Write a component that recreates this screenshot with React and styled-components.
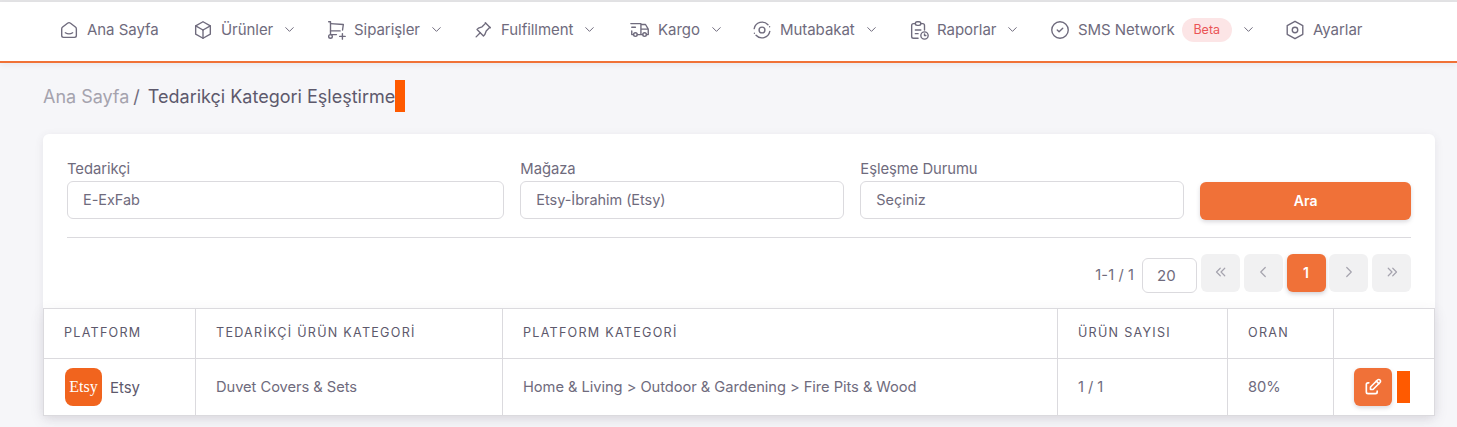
import React from "react";
import styled, { createGlobalStyle } from "styled-components";
import {
  TbSmartHome, TbBox, TbShoppingCartPlus, TbPin, TbTruckDelivery, TbCircleCheck,
  TbEdit, TbChevronDown, TbChevronLeft, TbChevronRight, TbChevronsLeft, TbChevronsRight,
} from "react-icons/tb";

const Global = createGlobalStyle`
  html, body { margin: 0; padding: 0; background: #f6f6f9; }
  body { font-family: Inter, "Noto Sans", sans-serif; color: #6f6b7d; height: 427px; overflow: hidden; }
  * { box-sizing: border-box; }
`;

const TopLine = styled.div`height: 2px; background: #e4e4e6;`;
const Nav = styled.nav`
  height: 61px; background: #fff; border-bottom: 2px solid #f07136;
  box-shadow: 0 2px 6px rgba(75,70,92,.08);
  display: flex; align-items: center; padding: 0 0 4px 58px;
`;
const NavItem = styled.div`
  width: ${p => p.$w}px; display: flex; align-items: center; flex: none;
  font-size: 15px; letter-spacing: -0.05px; color: #6f6b7d; white-space: nowrap;
  svg.main { width: 22px; height: 22px; flex: none; stroke-width: 1.5; margin-right: 7px; color: #6f6b7d; }
`;
const Chevron = styled(TbChevronDown)`
  width: 15px; height: 15px; margin-left: 9px; color: #6f6b7d; flex: none; stroke-width: 1.6;
`;
const Badge = styled.span`
  margin-left: 7px; width: 50px; height: 24px; border-radius: 12px; background: #fce5e6; color: #ea5455;
  font-size: 12.5px; display: flex; align-items: center; justify-content: center; letter-spacing: 0;
`;

const Main = styled.main`padding: 0 22px 0 43px;`;
const Crumbs = styled.div`
  height: 71px; display: flex; align-items: center; font-size: 18px; padding-bottom: 4px;
`;
const CrumbLink = styled.span`color: #a5a3ae; letter-spacing: -0.02px;`;
const CrumbSep = styled.span`color: #6f6b7d; margin: 0 8px 0 4px;`;
const CrumbNow = styled.span`color: #5d596c;`;
const Mark = styled.span`
  display: inline-block; background: #ff5a00; flex: none;
  width: ${p => p.$w}px; height: ${p => p.$h}px; margin-top: ${p => p.$raise ? -2 : 0}px;
`;

const Card = styled.section`
  background: #fff; border-radius: 6px; box-shadow: 0 2px 8px rgba(75,70,92,.1);
`;
const Filters = styled.div`padding: 24px 24px 0;`;
const FilterGrid = styled.div`
  display: grid; grid-template-columns: repeat(12, 1fr); column-gap: 16px; align-items: end;
  padding-bottom: 18px; border-bottom: 1px solid #dbdade;
`;
const Field = styled.label`grid-column: span ${p => p.$span}; display: block;`;
const Label = styled.div`font-size: 14.8px; line-height: 23px; color: #6f6b7d; letter-spacing: -0.05px;`;
const Input = styled.div`
  height: 38px; border: 1px solid #dbdade; border-radius: 6px; padding: 0 13px 2px 15px;
  display: flex; align-items: center; font-size: 14.5px; color: #6f6b7d; letter-spacing: -0.05px;
`;
const SearchButton = styled.button`
  grid-column: span 2; height: 38px; border: 0; border-radius: 6px; padding: 0 0 2px; background: #f07138; color: #fff;
  font: 600 14px Inter, sans-serif; box-shadow: 0 2px 4px rgba(75,70,92,.2); position: relative; top: 1px;
`;
const Pager = styled.div`
  height: 70px; display: flex; align-items: flex-start; justify-content: flex-end; padding-top: 16px;
`;
const PagerInfo = styled.span`font-size: 14.6px; margin: 12px 8px 0 0; letter-spacing: 0.1px;`;
const PageSize = styled.div`
  width: 55px; height: 35px; margin: 4px 4px 0 0; border: 1px solid #dbdade; border-radius: 6px;
  display: flex; align-items: center; padding-left: 14px; font-size: 15px;
`;
const PageButtons = styled.div`display: flex; gap: 3.75px;`;
const PageButton = styled.button`
  width: 39px; height: 38px; padding: 0 0 2px; border: 0; border-radius: 6px; display: flex; align-items: center; justify-content: center;
  background: ${p => p.$active ? "#f07138" : "#f1f1f2"}; color: ${p => p.$active ? "#fff" : "#a5a3ae"};
  font: 600 14px Inter, sans-serif; box-shadow: ${p => p.$active ? "0 2px 4px rgba(75,70,92,.25)" : "none"};
  svg { width: 18px; height: 18px; stroke-width: 1.6; }
`;

const Table = styled.table`
  width: 100%; table-layout: fixed; border-collapse: collapse; border: 1px solid #dbdade; background: #fff;
  box-shadow: 0 4px 14px rgba(75,70,92,.09);
`;
const Th = styled.th`
  height: 50px; padding: 0 20px 2px; border: 1px solid #dbdade; text-align: left; font-weight: 400;
  font-size: 12.6px; letter-spacing: 1.25px; color: #5d596c;
`;
const Td = styled.td`
  height: 57px; padding: 0 20px; border: 1px solid #dbdade; font-size: 14.7px; letter-spacing: -0.05px; color: #6f6b7d;
`;
const PlatformCell = styled.div`display: flex; align-items: center; gap: 8px; color: #5d596c; font-size: 15px;`;
const EtsyLogo = styled.span`
  width: 37px; height: 38px; border-radius: 8px; background: #f1641e; color: #fff; margin-left: 1px; margin-right: 0;
  font: 16px "Liberation Serif", serif; display: flex; align-items: center; justify-content: center; letter-spacing: 0;
`;
const ActionCell = styled.div`display: flex; align-items: center; gap: 5px;`;
const EditButton = styled.button`
  width: 38px; height: 38px; padding: 0; border: 0; border-radius: 6px; background: #f07138; color: #fff;
  display: flex; align-items: center; justify-content: center; box-shadow: 0 2px 4px rgba(75,70,92,.2);
  svg { width: 20px; height: 20px; }
`;

const MutabakatIcon = () => (
  <svg className="main" viewBox="0 0 24 24" fill="none" stroke="currentColor" strokeLinecap="round" strokeLinejoin="round">
    <circle cx="12" cy="12" r="3.200" />
    <path d="M3.500 10.500A8.700 8.700 0 0 1 18.500 6.300" />
    <path d="M20.500 13.500A8.700 8.700 0 0 1 5.500 17.700" />
    <path d="M20.300 8.500h.01M3.700 15.500h.01" />
  </svg>
);
const ReportIcon = () => (
  <svg className="main" viewBox="0 0 24 24" fill="none" stroke="currentColor" strokeLinecap="round" strokeLinejoin="round">
    <path d="M8 5H6a2 2 0 0 0-2 2v12a2 2 0 0 0 2 2h5" />
    <path d="M14 5h2a2 2 0 0 1 2 2v5" />
    <rect x="8" y="3" width="6" height="4" rx="2" />
    <path d="M8 12h6M8 16h3" />
    <circle cx="18" cy="18" r="4" />
    <path d="M18 16.200V18h1.500" />
  </svg>
);
const HexIcon = () => (
  <svg className="main" viewBox="0 0 24 24" fill="none" stroke="currentColor" strokeLinecap="round" strokeLinejoin="round">
    <path d="M12 2.500l8.500 4.800v9.400L12 21.500l-8.500-4.800V7.300z" />
    <circle cx="12" cy="12" r="3" />
  </svg>
);

const navItems = [
  { label: "Ana Sayfa", Icon: TbSmartHome, w: 134 },
  { label: "Ürünler", Icon: TbBox, w: 133, chev: true },
  { label: "Siparişler", Icon: TbShoppingCartPlus, w: 147, chev: true },
  { label: "Fulfillment", Icon: TbPin, w: 157, chev: true },
  { label: "Kargo", Icon: TbTruckDelivery, w: 122, chev: true },
  { label: "Mutabakat", Icon: MutabakatIcon, w: 157, chev: true },
  { label: "Raporlar", Icon: ReportIcon, w: 141, chev: true },
  { label: "SMS Network", Icon: TbCircleCheck, w: 235, chev: true, badge: true },
  { label: "Ayarlar", Icon: HexIcon, w: 90 },
];

export default function App() {
  return (
    <>
      <Global />
      <TopLine />
      <Nav>
        {navItems.map(({ label, Icon, w, chev, badge }) => (
          <NavItem key={label} $w={w}>
            <Icon className="main" />
            <span>{label}</span>
            {badge && <Badge>Beta</Badge>}
            {chev && <Chevron />}
          </NavItem>
        ))}
      </Nav>
      <Main>
        <Crumbs>
          <CrumbLink>Ana Sayfa</CrumbLink>
          <CrumbSep>/</CrumbSep>
          <CrumbNow>Tedarikçi Kategori Eşleştirme</CrumbNow>
          <Mark $w={10} $h={32} $raise />
        </Crumbs>
        <Card>
          <Filters>
            <FilterGrid>
              <Field $span={4}><Label>Tedarikçi</Label><Input>E-ExFab</Input></Field>
              <Field $span={3}><Label>Mağaza</Label><Input>Etsy-İbrahim (Etsy)</Input></Field>
              <Field $span={3}><Label>Eşleşme Durumu</Label><Input>Seçiniz</Input></Field>
              <SearchButton>Ara</SearchButton>
            </FilterGrid>
            <Pager>
              <PagerInfo>1-1 / 1</PagerInfo>
              <PageSize>20</PageSize>
              <PageButtons>
                <PageButton><TbChevronsLeft /></PageButton>
                <PageButton><TbChevronLeft /></PageButton>
                <PageButton $active>1</PageButton>
                <PageButton><TbChevronRight /></PageButton>
                <PageButton><TbChevronsRight /></PageButton>
              </PageButtons>
            </Pager>
          </Filters>
          <Table>
            <colgroup>
              <col style={{ width: 152 }} />
              <col style={{ width: 307 }} />
              <col style={{ width: 555 }} />
              <col style={{ width: 170 }} />
              <col style={{ width: 106 }} />
              <col />
            </colgroup>
            <thead>
              <tr>
                <Th>PLATFORM</Th>
                <Th>TEDARİKÇİ ÜRÜN KATEGORİ</Th>
                <Th>PLATFORM KATEGORİ</Th>
                <Th>ÜRÜN SAYISI</Th>
                <Th>ORAN</Th>
                <Th />
              </tr>
            </thead>
            <tbody>
              <tr>
                <Td><PlatformCell><EtsyLogo>Etsy</EtsyLogo>Etsy</PlatformCell></Td>
                <Td>Duvet Covers &amp; Sets</Td>
                <Td>Home &amp; Living &gt; Outdoor &amp; Gardening &gt; Fire Pits &amp; Wood</Td>
                <Td>1 / 1</Td>
                <Td>80%</Td>
                <Td>
                  <ActionCell>
                    <EditButton><TbEdit /></EditButton>
                    <Mark $w={13} $h={32} />
                  </ActionCell>
                </Td>
              </tr>
            </tbody>
          </Table>
        </Card>
      </Main>
    </>
  );
}
